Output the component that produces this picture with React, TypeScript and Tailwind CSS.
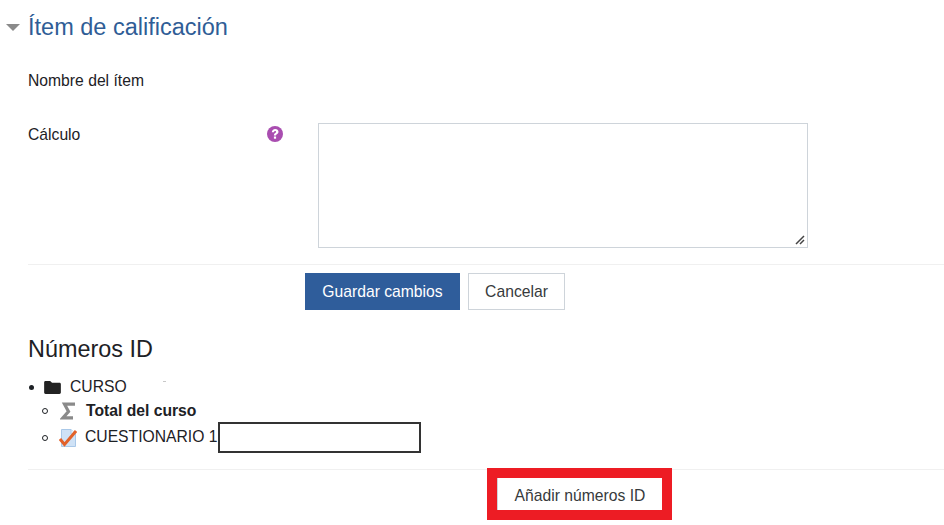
const font = { fontFamily: '"Liberation Sans", Arial, sans-serif' };

function HelpIcon() {
  return (
    <svg viewBox="0 0 16 16" className="h-4 w-4">
      <circle cx="8" cy="8" r="8" fill="#a94db0" />
      <path d="M4.800 6.200C4.900 4.300 6.300 3 8.200 3c1.900 0 3.300 1.200 3.300 2.800 0 1.300-.7 2-1.600 2.500-.6.4-.8.6-.8 1.300H6.900c0-1.400.4-2 1.300-2.600.6-.4.9-.7.9-1.100 0-.5-.4-.9-1-.9-.7 0-1.100.4-1.200 1.200z" fill="#fff" />
      <rect x="6.900" y="10.500" width="2.200" height="2.200" fill="#fff" />
    </svg>
  );
}

function SigmaIcon() {
  return (
    <svg viewBox="0 0 16 18" className="h-[18px] w-4">
      <path d="M15 2.200H4.500L8.500 9.500 3 15.800H13" stroke="#8a8a8a" strokeWidth="3.200" fill="none" strokeLinejoin="miter" />
    </svg>
  );
}

function QuizIcon() {
  return (
    <svg viewBox="0 0 18 18" className="h-[18px] w-[18px]">
      <path d="M2.500 .5h9.500l4.500 4.500v12.500H2.500z" fill="#cfe2f6" stroke="#a9c8e8" />
      <path d="M12 .5V5h4.500" fill="#eef5fc" stroke="#a9c8e8" />
      <path d="M1 10l4.500 5.500L17 2" stroke="#e2622a" strokeWidth="3" fill="none" />
    </svg>
  );
}

function FolderIcon() {
  return (
    <svg viewBox="0 0 18 14" className="h-[13px] w-[17px]">
      <path d="M0 1.500C0 .6.600 0 1.500 0h5l2 2h8c.9 0 1.500.6 1.500 1.500V12.500c0 .9-.6 1.500-1.500 1.500h-15C.6 14 0 13.400 0 12.500z" fill="#222" />
    </svg>
  );
}

function ResizeGrip() {
  return (
    <svg viewBox="0 0 10 10" className="pointer-events-none absolute bottom-[2px] right-[2px] h-[10px] w-[10px]">
      <path d="M1 9L9 1M5 9L9 5" stroke="#444" strokeWidth="1.500" fill="none" />
    </svg>
  );
}

export default function App() {
  return (
    <div style={font} className="h-[525px] w-[944px] overflow-hidden bg-white text-[15.700px] text-[#1d2125]">
      <div className="flex h-[54px] items-center pl-[6px]">
        <span className="mr-[8px] h-0 w-0 border-x-[7px] border-t-[7px] border-x-transparent border-t-[#8a8a8a]" />
        <h2 className="pt-[2px] text-[23.500px] leading-none text-[#2f5d96]">Ítem de calificación</h2>
      </div>

      <div className="pl-[28px]">
        <div className="flex h-[52px] items-center pt-[2px]">Nombre del ítem</div>

        <div className="mt-[17px] flex h-[141px]">
          <div className="flex h-[22px] w-[239px] items-center pt-[2px]">Cálculo</div>
          <div className="flex h-[22px] w-[51px] items-center">
            <HelpIcon />
          </div>
          <div className="relative h-[125px] w-[490px] border border-[#ced4da]">
            <ResizeGrip />
          </div>
        </div>

        <div className="border-t border-[#f0f0f0] pt-[8px]">
          <div className="flex gap-[8px] pl-[277px]">
            <button className="h-[37px] w-[155px] bg-[#2f5d9b] text-white">Guardar cambios</button>
            <button className="h-[37px] w-[97px] border border-[#ced4da] text-[#373a3c]">Cancelar</button>
          </div>
        </div>

        <h3 className="mt-[24px] text-[23.400px] leading-[30px]">Números ID</h3>

        <ul className="mt-[11px]">
          <li className="flex h-[24px] items-center">
            <span className="ml-[1px] h-[5px] w-[5px] rounded-full bg-[#1d2125]" />
            <span className="ml-[10px] flex"><FolderIcon /></span>
            <span className="ml-[9px]">CURSO</span>
            <span className="mb-[12px] ml-[36px] h-px w-[3px] bg-[#c8c8c8]" />
          </li>
          <li className="flex h-[23px] items-center">
            <span className="ml-[14px] h-[6px] w-[6px] rounded-full border border-[#1d2125]" />
            <span className="ml-[12px] flex"><SigmaIcon /></span>
            <span className="ml-[10px] font-bold">Total del curso</span>
          </li>
          <li className="flex h-[31px] items-center">
            <span className="ml-[14px] h-[6px] w-[6px] rounded-full border border-[#1d2125]" />
            <span className="ml-[11px] flex"><QuizIcon /></span>
            <span className="ml-[8px] pb-[2px]">CUESTIONARIO 1</span>
            <span className="h-[31px] w-[203px] border-2 border-[#333]" />
          </li>
        </ul>

        <div className="mt-[16px] border-t border-[#f0f0f0]" />
      </div>

      <div className="mt-[-2px] pl-[487px]">
        <div className="h-[52px] w-[185px] border-[10px] border-[#ed1c24]">
          <button className="h-full w-full border-l border-[#ced4da] bg-white pt-[4px] text-[#373a3c]">Añadir números ID</button>
        </div>
      </div>
    </div>
  );
}
